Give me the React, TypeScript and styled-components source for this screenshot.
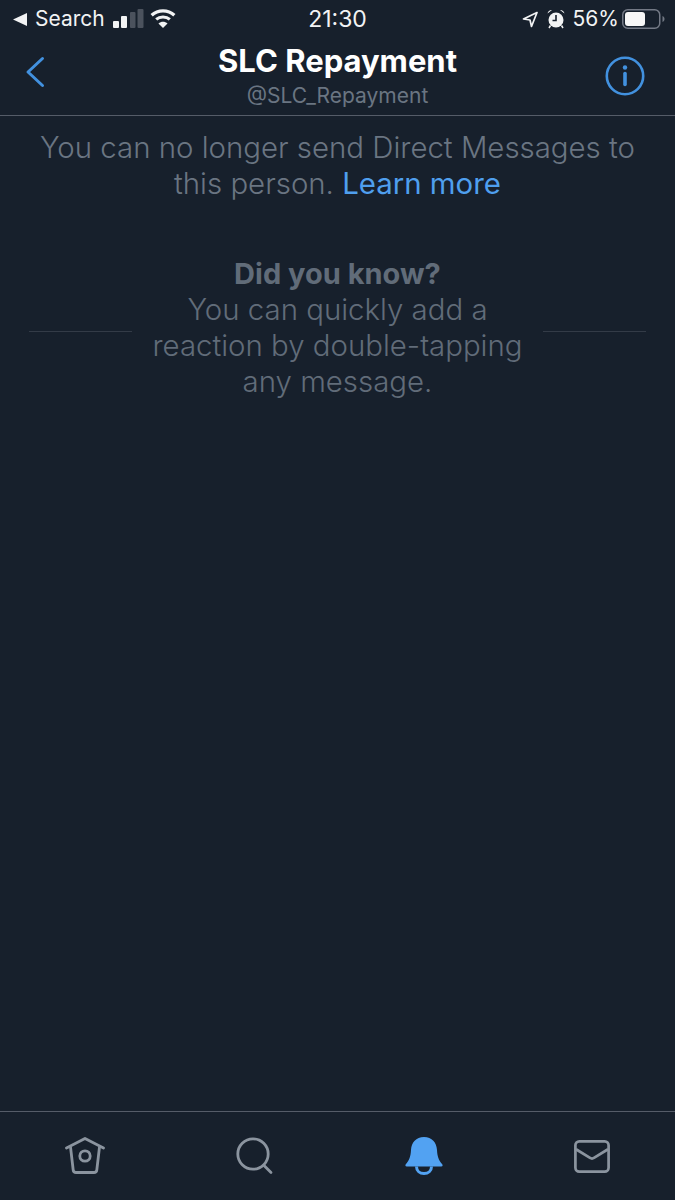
import React from 'react';
import styled, {createGlobalStyle} from 'styled-components';

const GlobalStyle = createGlobalStyle`
  html, body {
    margin: 0;
    padding: 0;
    background: #17202c;
  }
`;

const Screen = styled.div`
  display: flex;
  flex-direction: column;
  width: 675px;
  height: 1200px;
  overflow: hidden;
  background: #17202c;
  font-family: Inter, "Liberation Sans", sans-serif;
`;

const StatusBar = styled.div`
  display: grid;
  grid-template-columns: 1fr auto 1fr;
  align-items: center;
  height: 38px;
  padding: 0 10px;
  color: #f2f3f4;
  font-size: 21px;
`;

const StatusLeft = styled.div`
  display: flex;
  align-items: center;
  padding-left: 3px;
`;

const StatusRight = styled.div`
  display: flex;
  align-items: center;
  justify-content: flex-end;
`;

const StatusText = styled.span<{$left?: number}>`
  margin-left: ${(props) => props.$left || 0}px;
  line-height: 38px;
`;

const Clock = styled.span`
  font-size: 23px;
  line-height: 38px;
`;

const SignalIcon = styled.svg`
  display: block;
  margin: 0 0 2px 8px;
`;

const WifiIcon = styled.svg`
  display: block;
  margin: 0 0 2px 6px;
`;

const Header = styled.div`
  display: grid;
  grid-template-columns: 1fr auto 1fr;
  align-items: start;
  height: 77px;
  padding: 0 25px;
  border-bottom: 1px solid #555c68;
`;

const HeaderTitle = styled.div`
  display: flex;
  flex-direction: column;
  align-items: center;
`;

const Name = styled.div`
  color: #ffffff;
  font-size: 31px;
  font-weight: 700;
  line-height: 46px;
`;

const Handle = styled.div`
  margin-top: -3px;
  color: #6a7582;
  font-size: 21px;
  line-height: 30px;
`;

const BackIcon = styled.svg`
  display: block;
  margin-top: 18px;
`;

const InfoIcon = styled.svg`
  display: block;
  justify-self: end;
  margin: 18px 5px 0 0;
`;

const Notice = styled.div`
  padding: 14px 20px 0;
  color: #6a7582;
  font-size: 29.4px;
  font-weight: 300;
  line-height: 36px;
  text-align: center;
`;

const LearnMore = styled.span`
  color: #4f9fee;
  font-weight: 400;
`;

const Tip = styled.div`
  display: flex;
  align-items: center;
  justify-content: space-between;
  margin-top: 54px;
  padding: 0 29px;
`;

const TipRule = styled.div`
  width: 103px;
  height: 1px;
  margin-top: 6px;
  background: #333b47;
`;

const TipText = styled.div`
  color: #616c79;
  font-size: 29.4px;
  font-weight: 300;
  line-height: 36px;
  text-align: center;
`;

const TipTitle = styled.div`
  font-size: 29px;
  font-weight: 700;
`;

const Spacer = styled.div`
  flex: 1;
`;

const TabBar = styled.div`
  display: flex;
  align-items: flex-start;
  justify-content: space-between;
  height: 88px;
  padding: 0 65px;
  border-top: 1px solid #555c68;
`;

const TabIcon = styled.svg<{$top?: number}>`
  display: block;
  margin-top: ${(props) => props.$top || 25}px;
`;

const App = () => (
  <Screen>
    <GlobalStyle />
    <StatusBar>
      <StatusLeft>
        <svg width="14" height="13" viewBox="0 0 14 13"><path d="M14 0v13L0 6.5z" fill="#f2f3f4" /></svg>
        <StatusText $left={8}>Search</StatusText>
        <SignalIcon width="31" height="19" viewBox="0 0 31 19">
          <rect x="0" y="12" width="6" height="7" rx="1" fill="#f2f3f4" />
          <rect x="8" y="7" width="6" height="12" rx="1" fill="#f2f3f4" />
          <rect x="17" y="3" width="5.500" height="16" rx="1" fill="#4b525d" />
          <rect x="24.500" y="0" width="6" height="19" rx="1" fill="#4b525d" />
        </SignalIcon>
        <WifiIcon width="26" height="20" viewBox="0 0 28 22">
          <path d="M1.500 8C8.500 1.500 19.500 1.500 26.500 8" fill="none" stroke="#f2f3f4" strokeWidth="3.600" />
          <path d="M6.500 12.500C10.500 9 17.500 9 21.500 12.500" fill="none" stroke="#f2f3f4" strokeWidth="3.400" />
          <path d="M14 22l-5-5c3-2.400 7-2.400 10 0z" fill="#f2f3f4" />
        </WifiIcon>
      </StatusLeft>
      <Clock>21:30</Clock>
      <StatusRight>
        <svg width="16" height="17" viewBox="0 0 16 17" style={{marginRight: 1}}>
          <path d="M15 1.500L1.500 8l6.500 1 1.500 6.500z" fill="none" stroke="#f2f3f4" strokeWidth="1.700" strokeLinejoin="round" />
        </svg>
        <svg width="18" height="20" viewBox="0 0 18 20" style={{marginLeft: 8}}>
          <circle cx="9" cy="11" r="7.500" fill="#f2f3f4" />
          <path d="M9 6v5.500H5.500" fill="none" stroke="#17202c" strokeWidth="1.600" />
          <path d="M0.500 4.500C1 2 3 0.800 5 1zM17.500 4.500C17 2 15 0.800 13 1z" fill="#f2f3f4" />
          <path d="M3.500 16.500L2 19M14.500 16.500L16 19" stroke="#f2f3f4" strokeWidth="1.500" />
        </svg>
        <StatusText $left={8}>56%</StatusText>
        <svg width="43" height="20" viewBox="0 0 43 20" style={{marginLeft: 3}}>
          <rect x="0.750" y="0.750" width="37" height="18.500" rx="5" fill="none" stroke="#737985" strokeWidth="1.500" />
          <rect x="3" y="3" width="20" height="14" rx="3" fill="#f7f7f7" />
          <path d="M40.500 7c1.300.5 2 1.600 2 3s-.7 2.500-2 3z" fill="#737985" />
        </svg>
      </StatusRight>
    </StatusBar>

    <Header>
      <BackIcon width="20" height="32" viewBox="0 0 20 32">
        <path d="M17.500 2.500L3 16l14.500 13.500" fill="none" stroke="#4291df" strokeWidth="3" strokeLinecap="round" strokeLinejoin="round" />
      </BackIcon>
      <HeaderTitle>
        <Name>SLC Repayment</Name>
        <Handle>@SLC_Repayment</Handle>
      </HeaderTitle>
      <InfoIcon width="40" height="40" viewBox="0 0 40 40">
        <circle cx="20" cy="20" r="18.200" fill="none" stroke="#4291df" strokeWidth="2.600" />
        <circle cx="20" cy="11.500" r="2.200" fill="#4291df" />
        <path d="M20 17.500v11" stroke="#4291df" strokeWidth="3.600" strokeLinecap="round" />
      </InfoIcon>
    </Header>

    <Notice>
      You can no longer send Direct Messages to
      <br />
      this person. <LearnMore>Learn more</LearnMore>
    </Notice>

    <Tip>
      <TipRule />
      <TipText>
        <TipTitle>Did you know?</TipTitle>
        You can quickly add a
        <br />
        reaction by double-tapping
        <br />
        any message.
      </TipText>
      <TipRule />
    </Tip>

    <Spacer />

    <TabBar>
      <TabIcon width="40" height="38" viewBox="0 0 40 38">
        <path d="M1.500 11L20 1.500 38.500 11" fill="none" stroke="#8b949f" strokeWidth="2.800" strokeLinecap="round" strokeLinejoin="round" />
        <path d="M5.500 10l2.700 23c.2 1.500 1 2.500 2.800 2.500h18c1.800 0 2.600-1 2.800-2.500l2.700-23" fill="none" stroke="#8b949f" strokeWidth="2.800" strokeLinejoin="round" />
        <circle cx="20" cy="19" r="5.200" fill="none" stroke="#8b949f" strokeWidth="2.800" />
      </TabIcon>
      <TabIcon width="37" height="38" viewBox="0 0 37 38">
        <circle cx="17" cy="17" r="15.200" fill="none" stroke="#8b949f" strokeWidth="2.800" />
        <path d="M28 28.500l7 7" fill="none" stroke="#8b949f" strokeWidth="2.800" strokeLinecap="round" />
      </TabIcon>
      <TabIcon width="38" height="38" viewBox="0 0 38 38">
        <path d="M19 0C11 0 6.500 5.500 6 13c-.3 6-1.500 10-5 14-1 1-.8 2.500.8 2.500h34.400c1.600 0 1.800-1.500.8-2.500-3.500-4-4.700-8-5-14C31.500 5.500 27 0 19 0z" fill="#52a2f2" />
        <path d="M11.500 29.500c0 4.500 3.300 7 7.500 7s7.500-2.500 7.500-7" fill="none" stroke="#52a2f2" strokeWidth="3" />
      </TabIcon>
      <TabIcon $top={28} width="36" height="33" viewBox="0 0 37 34">
        <rect x="1.400" y="1.400" width="34.200" height="31.200" rx="4" fill="none" stroke="#8b949f" strokeWidth="2.800" />
        <path d="M2 9.500l14.500 9c1.300.8 2.700.8 4 0l14.500-9" fill="none" stroke="#8b949f" strokeWidth="2.800" />
      </TabIcon>
    </TabBar>
  </Screen>
);

export default App;
